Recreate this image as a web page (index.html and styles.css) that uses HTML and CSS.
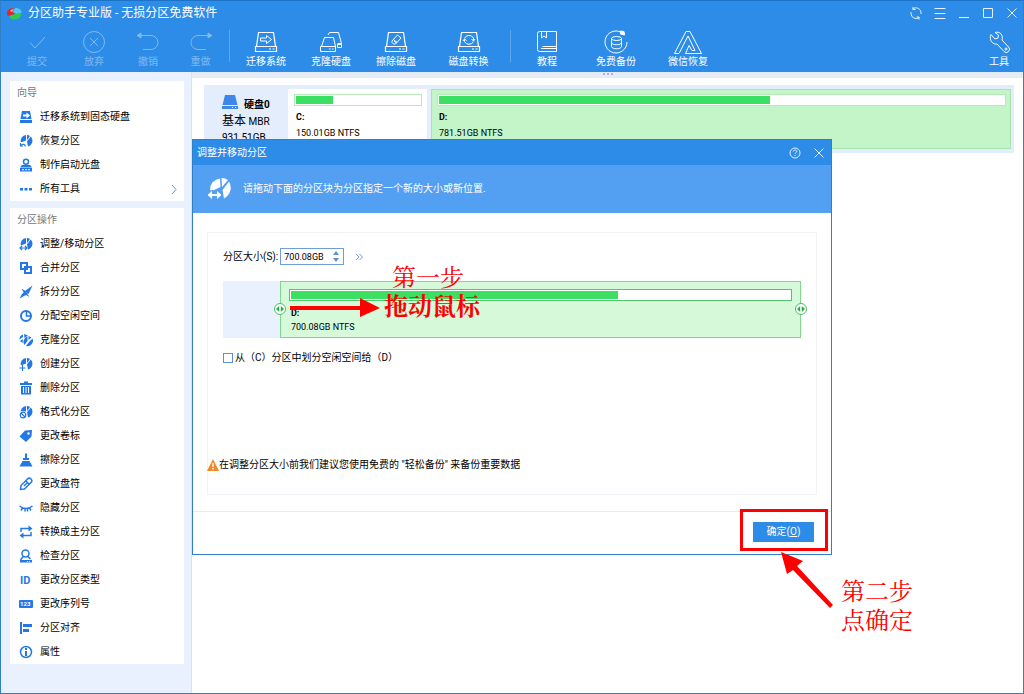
FILE: index.html
```html
<!DOCTYPE html>
<html lang="zh-CN">
<head>
<meta charset="utf-8">
<meta name="viewport" content="width=device-width, initial-scale=1">
<title>分区助手专业版 - 无损分区免费软件</title>
<link rel="stylesheet" href="styles.css">
</head>
<body>
<svg class="defs" aria-hidden="true">
  <symbol id="pie" viewBox="0 0 14 14"><path d="M7 1v5.500L1.800 8.500A6.200 6.200 0 0 1 7 1z"/><path d="M8 .8A6 6 0 0 1 11 2L8.500 5.500 8 6z"/><path d="M11.800 2.600A6 6 0 0 1 9 12.500L8 7.300z"/></symbol>
  <symbol id="disk" viewBox="0 0 24 24"><g fill="none" stroke="currentColor" stroke-width="1.2"><path d="M4.5 2.5h15l2 14h-19zM1.5 16.5h21v5h-21z"/><path d="M15 19h2M18.500 19h2"/></g></symbol>
</svg>
<div class="app">
  <header class="top">
    <div class="titlebar">
      <svg class="logo" viewBox="0 0 16 13"><path d="M1 6c0-4 5-6 8-4L6.500 5l3 2L2 9C1 8 1 7 1 6z" fill="#e8262a"/><path d="M9 1c4-.5 7 2 6.500 5L10 7 7 5z" fill="#56c4f2"/><path d="M3 9l6-2 6-.5c1 3-3 6-7 6-2 0-4-1-5-3.500z" fill="#2ecb50"/><path d="M4 4c1-1.500 3-2 4-1.500L6 5z" fill="#f5a196"/></svg>
      <h1>分区助手专业版 - 无损分区免费软件</h1>
      <div class="winbtns">
        <button aria-label="刷新"><svg viewBox="0 0 14 14"><path d="M3.500 3A5.300 5.300 0 0 1 12 6v2M10.500 11.500A5.300 5.300 0 0 1 2 8V6M4 1v2.500h2.500M10 13.500V11H7.500"/></svg></button>
        <button aria-label="菜单"><svg viewBox="0 0 14 14"><path d="M1.500 2.500h11M1.500 7.500h11M1.500 12.500h11"/></svg></button>
        <button aria-label="最小化"><svg viewBox="0 0 14 14"><path d="M2 11.500h10"/></svg></button>
        <button aria-label="最大化"><svg viewBox="0 0 14 14"><path d="M2.500 2.500h9v9h-9z"/></svg></button>
        <button aria-label="关闭"><svg viewBox="0 0 14 14"><path d="M2.500 2.500l9 9M11.500 2.500l-9 9"/></svg></button>
      </div>
    </div>
    <nav class="toolbar">
      <div class="group edit">
        <button disabled><svg viewBox="0 0 24 24"><path d="M5 12.500l5 5.500L20 7"/></svg>提交</button>
        <button disabled><svg viewBox="0 0 24 24"><circle cx="12" cy="12" r="10.500"/><path d="M8 8l8 8M16 8l-8 8"/></svg>放弃</button>
        <button disabled><svg viewBox="0 0 24 24"><path d="M4 5.500h11a7 7 0 0 1 0 14H7"/><path class="solid" d="M1 5.500L5 3v5z"/></svg>撤销</button>
        <button disabled><svg viewBox="0 0 24 24"><path d="M20 5.500H9a7 7 0 0 0 0 14h8"/><path class="solid" d="M23 5.500L19 3v5z"/></svg>重做</button>
      </div>
      <div class="group disks">
        <button><svg viewBox="0 0 24 24"><use href="#disk"/><path d="M6.500 8h6V5.500l5 4-5 4V11h-6z"/></svg>迁移系统</button>
        <button><svg viewBox="0 0 24 24"><path d="M5.500 7.500h9l2 9h-14zM1.500 16.500h15v5h-15zM10 19h1.500M13 19h1.500M9 5l1.500-2.500h9l3 11h-4M18.500 14.500h4v3h-4z"/></svg>克隆硬盘</button>
        <button><svg viewBox="0 0 24 24"><use href="#disk"/><path d="M8 11l5.500-6 3.500 3-5.500 6H9.500L8 12.500zM9.500 9.500l3.500 3M10 11l2 1.500"/></svg>擦除磁盘</button>
        <button><svg viewBox="0 0 24 24"><use href="#disk"/><path d="M7.500 8.500a5 5 0 0 1 9-.5v2.500M16.500 11.500a5 5 0 0 1-9 0V9.500M6 11L7.500 9 9.500 10.500M14.500 9l2 2L18 9"/></svg>磁盘转换</button>
      </div>
      <div class="group help">
        <button><svg viewBox="0 0 24 24"><path d="M2.500 3.500q0-2 2-2h17v20h-17q-2 0-2-2zM21.500 16.500h-14M6.500 2v6l2.500-2 2.500 2V2M6 18.500h15"/></svg>教程</button>
        <button><svg viewBox="0 0 24 24"><path d="M19 3.500A11 11 0 1 0 23 12M7.500 8.500v8c0 3 10 3 10 0v-8M7.500 12.500c0 3 10 3 10 0"/><ellipse cx="12.500" cy="8.500" rx="5" ry="2"/><path class="solid" d="M16.500 1l3.500.5.500 3.500-4-1z"/></svg>免费备份</button>
        <button><svg class="wide" viewBox="0 0 28 24"><path d="M.5 23.500L12 1.500h4l11.500 22h-16l3.500-8 3 5h3L14 6 5 23.500z"/></svg>微信恢复</button>
      </div>
      <div class="group tools">
        <button><svg viewBox="0 0 24 24"><path d="M4 4.500l4 4.500 3-1 .5-3L8 2.500C13 1 16.500 5 15 10l6.500 7a3 3 0 0 1-4.500 4.500L10 14C6 15 1.500 10 4 4.500z"/><circle cx="19" cy="19" r="1"/></svg>工具</button>
      </div>
    </nav>
  </header>

  <div class="body">
    <aside class="side">
      <section class="card">
        <h2>向导</h2>
        <button><svg viewBox="0 0 14 14"><path d="M3 1h8l1.500 8h-11zM1 10h12v3H1z"/><path class="cut" d="M4 4.500h3.500V2.500l3.500 3-3.500 3v-2H4z"/></svg>迁移系统到固态硬盘</button>
        <button><svg viewBox="0 0 14 14"><use href="#pie"/><path class="halo" d="M.5 8v5h6.500c-1-3-4-4-5.500-1.500"/><path class="mark" d="M1.500 9v3H4M2 11.500c1.500-2 4-1.500 4.500 1"/></svg>恢复分区</button>
        <button><svg viewBox="0 0 14 14"><circle cx="7" cy="3.800" r="2.500" class="ln"/><path d="M3 7h8l2 2.500H1zM1 10h12v3.500H1z"/><path class="cut" d="M3 11.200h2v1H3zM6 11.200h2v1H6zM9 11.200h2v1H9z"/></svg>制作启动光盘</button>
        <button><svg viewBox="0 0 14 14"><path d="M1 6h3v2.500H1zM5.500 6h3v2.500h-3zM10 6h3v2.500h-3z"/></svg>所有工具<svg class="chev" viewBox="0 0 14 14"><path d="M5 3l4 4.500L5 12"/></svg></button>
      </section>
      <section class="card">
        <h2>分区操作</h2>
        <button><svg viewBox="0 0 14 14"><use href="#pie"/><path class="halo" d="M1 11h7"/><path class="mark" d="M1 11h7M3 9l-2 2 2 2M6 9l2 2-2 2"/></svg>调整/移动分区</button>
        <button><svg viewBox="0 0 14 14"><path class="ln thick" d="M2 2h6v6H2zM6 6h6v6H6z"/></svg>合并分区</button>
        <button><svg viewBox="0 0 14 14"><path d="M13.500.5L9.500 9 6 6zM6 6l3 3-4 2L.5 13.500 3 9zM2.500 3.500L6.500 6 5 8zM8 8.500l2.500 3.500L7 10z"/></svg>拆分分区</button>
        <button><svg viewBox="0 0 14 14"><circle cx="7" cy="7" r="5" class="ln thick"/><path class="ln" d="M7.500 2v5H12"/></svg>分配空闲空间</button>
        <button><svg viewBox="0 0 14 14"><path d="M.5 6.500A5 5 0 0 1 4 1.500V4zM5 1l4 1.500L5.500 5zM4 6l-.5 4-2.500-2z"/><path d="M8.500 3.500V8L5.500 12A5.500 5.500 0 0 1 8.500 3.500zM9.500 3l3 1.500-3 2.500zM13.500 5.500a5.500 5.500 0 0 1-6.500 7.500L10 9z"/></svg>克隆分区</button>
        <button><svg viewBox="0 0 14 14"><use href="#pie"/><path class="halo" d="M0 11h7M3.500 8v6"/><path class="mark" d="M.5 11h6M3.500 8v6"/></svg>创建分区</button>
        <button><svg viewBox="0 0 14 14"><path d="M1 2h4V.5h4V2h4v2H1zM2 5h10v8.500H2z"/><path class="cut" d="M4 6h1v6H4zM6.500 6h1v6h-1zM9 6h1v6H9z"/></svg>删除分区</button>
        <button><svg viewBox="0 0 14 14"><use href="#pie"/><circle cx="4" cy="10" r="4" class="cut"/><circle cx="4" cy="10" r="2.800" class="mark"/><path class="mark" d="M2 8l4 4"/></svg>格式化分区</button>
        <button><svg viewBox="0 0 14 14"><path d="M.5 7.500L6 1.500l7-.5-.5 6.500L7 13z"/><circle class="cut" cx="9.500" cy="4.500" r="1.200"/></svg>更改卷标</button>
        <button><svg viewBox="0 0 14 14"><path d="M6 .5h2V5h2v2H4V5h2zM3.500 8h7l3 5.500H.5z"/></svg>擦除分区</button>
        <button><svg viewBox="0 0 14 14"><path class="ln" d="M1.500 12.500l.5-4 6.500-6.500a2 2 0 0 1 3.500 3.500L5.500 12zM7 4l3 3M5 9l3-3"/></svg>更改盘符</button>
        <button><svg viewBox="0 0 14 14"><path class="ln" d="M.5 5q6.500 5 13 0M3.500 7L2 9.500M6 8v2.500M10.500 7l1.500 2.500M8.500 8v2.500"/></svg>隐藏分区</button>
        <button><svg viewBox="0 0 14 14"><path class="ln" d="M2 7V3.500h8M12 7v3.500H4"/><path d="M9.500.5l4 3-4 3zM4.500 7.500l-4 3 4 3z"/></svg>转换成主分区</button>
        <button><svg viewBox="0 0 14 14"><circle cx="6.500" cy="4.500" r="3.500" class="ln"/><path class="ln" d="M8.500 7l3 3M4.500 7.500L2 10v1"/><path d="M1 11h12v2.500H1z"/><path class="cut" d="M8 12h1v.800H8zM10 12h1v.800h-1z"/></svg>检查分区</button>
        <button><svg viewBox="0 0 14 14"><text x="1" y="11" class="idtxt">ID</text></svg>更改分区类型</button>
        <button><svg viewBox="0 0 14 14"><rect x="0" y="3" width="14" height="8" rx="1"/><text x="1" y="9" class="numtxt">123</text></svg>更改序列号</button>
        <button><svg viewBox="0 0 14 14"><path d="M1 1h2v12H1zM4 3h9v3H4zM4 8h6v3H4z"/></svg>分区对齐</button>
        <button><svg viewBox="0 0 14 14"><circle cx="7" cy="7" r="5.500" class="ln"/><path d="M6 3h2v2H6zM6 6h2v5H6z"/></svg>属性</button>
      </section>
    </aside>

    <main class="main">
      <div class="splitter"><i></i><i></i><i></i></div>
      <section class="diskrow">
        <div class="diskinfo">
          <div class="diskname"><svg viewBox="0 0 16 14"><path d="M3 0h10l2.500 10h-15z"/><path d="M0 11h16v3H0z"/><path class="cut" d="M10 12h1v1h-1zM13 12h1v1h-1z"/></svg><b>硬盘0</b></div>
          <div><span class="kind">基本</span> MBR</div>
          <div>931.51GB</div>
        </div>
        <div class="part">
          <div class="usage"><div class="fill" style="width:30%"></div></div>
          <b>C:</b><span>150.01GB NTFS</span>
        </div>
        <div class="part selected">
          <div class="usage"><div class="fill" style="width:58.500%"></div></div>
          <b>D:</b><span>781.51GB NTFS</span>
        </div>
      </section>
    </main>
  </div>

  <section class="dialog" role="dialog" aria-labelledby="dlg">
    <header class="dtitle">
      <h2 id="dlg">调整并移动分区</h2>
      <button aria-label="帮助"><svg viewBox="0 0 14 14"><circle cx="7" cy="7" r="5"/><path d="M5.300 5.500c0-2 3.500-2 3.500 0 0 1.200-1.800 1.200-1.800 2.500M7 9v1"/></svg></button>
      <button aria-label="关闭"><svg viewBox="0 0 14 14"><path d="M2.500 2.500l9 9M11.500 2.500l-9 9"/></svg></button>
    </header>
    <div class="banner">
      <svg viewBox="0 0 26 24"><path d="M3 13A11 11 0 0 1 13 1.500l.5 8.500L5 14z"/><path d="M14.500 1A11 11 0 0 1 21 3l-6 7zM22 4.500A12 12 0 0 1 17 21.500L15.500 13z"/><path class="barrow" d="M0 18l5.500-5v3.500h4V13l5.500 5-5.500 5v-3.500h-4V23z"/></svg>
      <p>请拖动下面的分区块为分区指定一个新的大小或新位置.</p>
    </div>
    <div class="dbody">
      <div class="box">
        <div class="sizerow">
          <label for="size">分区大小(S):</label>
          <div class="spin">
            <input id="size" type="text" value="700.08GB">
            <div class="steps">
              <button aria-label="增加"><svg viewBox="0 0 6 4"><path d="M0 4l3-4 3 4z"/></svg></button>
              <button aria-label="减少"><svg viewBox="0 0 6 4"><path d="M0 0l3 4 3-4z"/></svg></button>
            </div>
          </div>
          <button class="more" aria-label="更多"><svg viewBox="0 0 8 8"><path d="M1 1l3 3-3 3M4.500 1l3 3-3 3"/></svg></button>
        </div>
        <div class="resizer">
          <div class="block">
            <div class="usage"><div class="fill" style="width:65.500%"></div></div>
            <b>D:</b><span>700.08GB NTFS</span>
            <button class="grip left" aria-label="左边界"><svg viewBox="0 0 14 14"><circle cx="7" cy="7" r="5.500"/><path d="M6.200 4v6L3 7zM7.800 4v6L11 7z"/></svg></button>
            <button class="grip right" aria-label="右边界"><svg viewBox="0 0 14 14"><circle cx="7" cy="7" r="5.500"/><path d="M6.200 4v6L3 7zM7.800 4v6L11 7z"/></svg></button>
          </div>
        </div>
        <label class="check"><input type="checkbox">从（C）分区中划分空闲空间给（D）</label>
        <p class="warn"><svg viewBox="0 0 12 12"><path d="M6 0l6 12H0z" fill="#f08a24"/><path d="M5.300 4h1.400v4H5.300zM5.300 9h1.400v1.500H5.300z" fill="#fff"/></svg>在调整分区大小前我们建议您使用免费的 "轻松备份" 来备份重要数据</p>
      </div>
    </div>
    <footer class="dfoot"><button class="ok">确定(<u>O</u>)</button></footer>
  </section>

  <div class="notes">
    <svg class="arrow1" viewBox="0 0 90 20"><path d="M0 8h70V0l20 10-20 9v-7H0z"/></svg>
    <p class="note step1">第一步</p>
    <p class="note drag">拖动鼠标</p>
    <div class="frame"></div>
    <svg class="arrow2" viewBox="0 0 52 56"><path d="M0 0l22 9-6 5 36 39-3 3L12 18l-6 4z"/></svg>
    <p class="note step2">第二步<br>点确定</p>
  </div>
</div>
</body>
</html>
```
FILE: styles.css
```css
* { box-sizing: border-box; }
body, h1, h2, p { margin: 0; }
h1, h2 { font-weight: 400; }
body {
  font: 10px/14px Roboto, "Noto Sans CJK SC", sans-serif;
  color: #000;
  background: #fff;
}
button {
  border: 0;
  padding: 0;
  background: none;
  font: inherit;
  color: inherit;
}
svg { display: block; flex: none; }
.defs { position: absolute; width: 0; height: 0; }
.app {
  position: relative;
  min-height: 100vh;
  display: flex;
  flex-direction: column;
  border: 1px solid #2f80c8;
  border-top-color: #1b73c5;
}

/* Title bar and toolbar */
.top {
  height: 71px;
  background: #2d8ce7;
  color: #fff;
}
.titlebar { display: flex; align-items: center; height: 24px; padding: 0 4px 0 5px; gap: 6px; }
.logo { width: 16px; height: 13px; }
.titlebar h1 { font-size: 12px; line-height: 16px; }
.winbtns { display: flex; gap: 10px; margin-left: auto; }
.winbtns svg, .dtitle svg { width: 14px; height: 14px; fill: none; stroke: #e6f2ff; stroke-width: 1; }
.toolbar { display: flex; padding: 5px 5px 0 9px; }
.group { display: grid; height: 32px; }
.edit { grid-template-columns: 54px 60px 48px 57px; }
.disks { grid-template-columns: 72px 58px 72px 73px; padding-right: 5px; border-left: 1px solid #5da7ed; }
.help { grid-template-columns: 72px 66px 78px; border-left: 1px solid #5da7ed; }
.tools { margin-left: auto; width: 38px; }
.group button { display: flex; flex-direction: column; align-items: center; gap: 1px; height: 38px; color: #fff; }
.group button:disabled { color: #80b9f1; }
.group svg { width: 24px; height: 24px; fill: none; stroke: currentColor; stroke-width: 1; }
.group svg.wide { width: 28px; }
.group .solid { fill: currentColor; }

/* Sidebar */
.body { flex: 1; display: flex; }
.side {
  width: 191px;
  flex: none;
  padding: 9px 7px 20px 9px;
  background: #eaf1fe;
  border-right: 1px solid #d9e2f2;
  display: flex;
  flex-direction: column;
  gap: 7px;
}
.card { background: #fff; display: flex; flex-direction: column; }
.card h2 { height: 24px; padding: 0 7px; font-size: 10px; line-height: 24px; color: #777; }
.card button { display: flex; align-items: center; height: 24px; padding: 0 3px 0 9px; gap: 7px; text-align: left; }
.card svg { width: 14px; height: 14px; fill: #2478e6; }
.card svg.chev { margin-left: auto; fill: none; stroke: #4a9be8; }
.ln, .mark, .halo { fill: none; stroke: #2478e6; stroke-width: 1.500; }
.card .mark { fill: none; stroke-width: 1.200; }
.card .thick { stroke-width: 2; }
.card .halo { stroke: #fff; stroke-width: 4; }
svg .cut { fill: #fff; }
.idtxt { font: 700 11px "Open Sans", sans-serif; font-family: Roboto, sans-serif; }
.numtxt { font: 700 6px Roboto, sans-serif; fill: #fff; }

/* Disk map */
.main { flex: 1; min-width: 0; }
.splitter { height: 6px; display: flex; justify-content: center; gap: 2px; background: #e6ecf6; padding-top: 1px; }
.splitter i { width: 2px; height: 2px; background: #a9b8cf; }
.diskrow { display: flex; gap: 4px; margin: 7px 9px 0 12px; padding: 4px 3px; height: 68px; background: #e4edfc; overflow: hidden; }
.diskinfo { width: 77px; padding: 6px 0 0 15px; line-height: 16px; }
.diskname { display: flex; gap: 6px; height: 18px; }
.diskname b { line-height: 20px; }
.diskname svg { width: 16px; height: 14px; fill: #3f86ea; }
.kind { font-size: 12px; }
.part { width: 139px; padding: 4px 4px 0 5px; background: #fff; border: 1px solid #fff; font-size: 9px; }
.part b, .part span { display: block; line-height: 16px; padding-left: 2px; }
.part b { margin-top: 3px; }
.part.selected { flex: 1; background: #c3f5c9; border-color: #a6e5b0; }
.usage { height: 12px; padding: 1px; background: #fff; border: 1px solid #b7e9bf; }
.fill { height: 100%; background: #3bdf62; }

/* Resize dialog */
.dialog {
  position: absolute;
  left: 191px;
  top: 138px;
  width: 640px;
  background: #fff;
  border: 1px solid #2f80c8;
}
.dtitle { display: flex; align-items: center; gap: 10px; height: 25px; padding: 0 5px 0 4px; background: #2d8ce7; color: #fff; }
.dtitle h2 { flex: 1; font-size: 10px; }
.banner { display: flex; align-items: center; gap: 10px; height: 48px; padding: 0 14px; background: #539ff2; color: #fff; }
.banner svg { width: 26px; height: 24px; fill: #fff; }
.barrow { stroke: #539ff2; stroke-width: 1; }
.dbody { padding: 19px 14px 16px; }
.box { display: flex; flex-direction: column; border: 1px solid #f0f2f7; padding: 15px 15px 22px; }
.sizerow { display: flex; align-items: center; gap: 2px; height: 17px; }
.spin { display: flex; width: 64px; height: 17px; border: 1px solid #6f9ddb; background: #fff; }
.spin input { flex: 1; min-width: 0; border: 0; padding: 0 3px; background: none; font: 9px/14px Roboto, sans-serif; color: #000; outline: 0; }
.steps { display: flex; flex-direction: column; justify-content: center; gap: 3px; width: 15px; align-items: center; }
.steps svg { width: 6px; height: 4px; fill: #5b8fd8; }
.more { margin-left: 9px; }
.more svg { width: 8px; height: 8px; fill: none; stroke: #6f9ddb; stroke-width: 1; }
.resizer { margin-top: 16px; padding-left: 57px; background: #eaf1fe; }
.block { position: relative; height: 57px; padding: 7px 8px 0; background: #d6f9da; border: 1px solid #82d78e; font-size: 9px; }
.block .usage { border-color: #52c46c; }
.block b, .block span { display: block; line-height: 14px; padding-left: 2px; }
.block b { margin-top: 5px; }
.grip { position: absolute; top: 20px; width: 14px; height: 14px; }
.grip.left { left: -8px; }
.grip.right { right: -8px; }
.grip svg { width: 14px; height: 14px; fill: #24ad43; }
.grip circle { fill: #fff; stroke: #4fbd65; }
.check { display: flex; align-items: center; gap: 2px; height: 14px; margin-top: 13px; }
.check input { appearance: none; width: 10px; height: 10px; margin: 0; border: 1px solid #5b8fd8; background: #fff; }
.warn { display: flex; align-items: center; margin: 93px 0 0 -16px; }
.warn svg { width: 12px; height: 12px; }
.dfoot { display: flex; justify-content: flex-end; border-top: 1px solid #e8ebf4; padding: 10px 17px 12px; }
.ok { width: 61px; height: 20px; background: #2d8ce7; color: #fff; }

/* Hand-drawn guidance over the window */
.notes { color: #f00; fill: #f00; }
.notes > * { position: absolute; }
.note { font: 24px/29px "Noto Serif CJK SC", "Noto Sans CJK SC", serif; white-space: nowrap; }
.step1 { left: 391px; top: 260px; }
.drag { left: 383px; top: 289px; font-weight: 700; }
.step2 { left: 840px; top: 574px; }
.arrow1 { left: 289px; top: 297px; width: 90px; height: 20px; }
.arrow2 { left: 780px; top: 551px; width: 52px; height: 56px; }
.frame { left: 739px; top: 508px; width: 88px; height: 42px; border: 3px solid #f00; }
```
